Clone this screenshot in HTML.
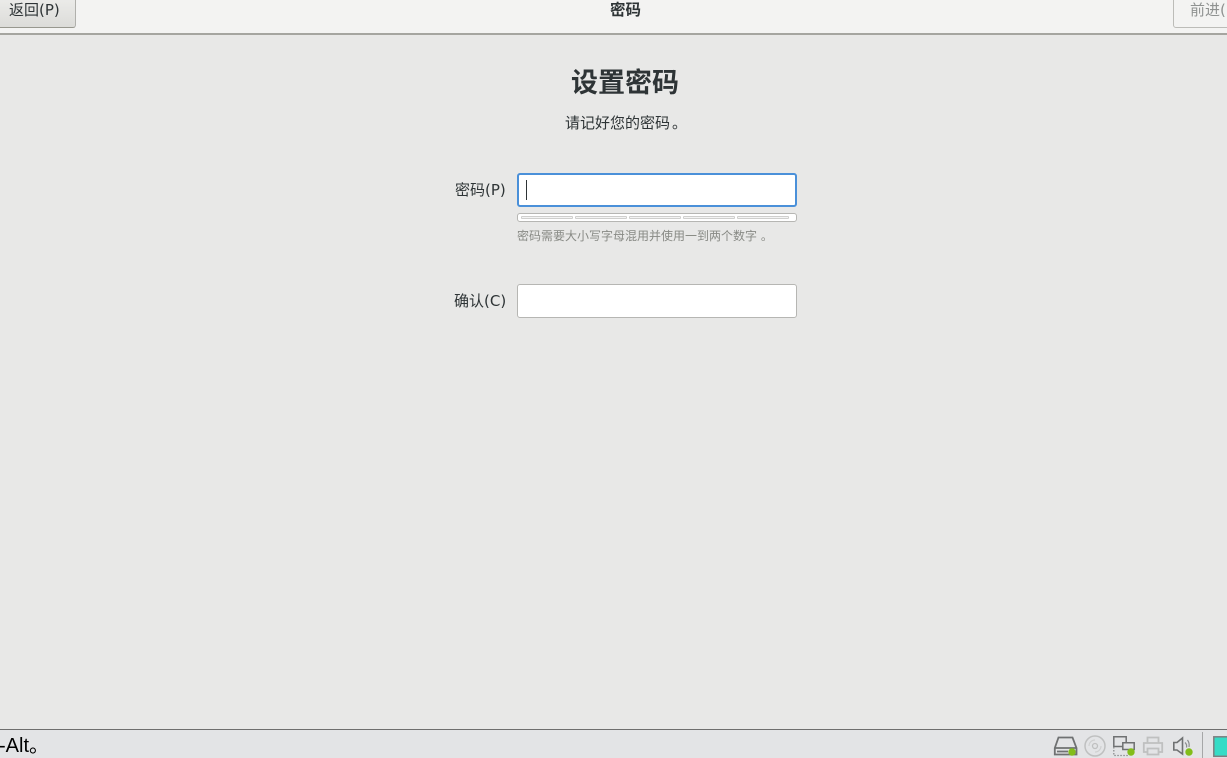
<!DOCTYPE html>
<html lang="zh"><head><meta charset="utf-8"><title>密码</title>
<style>
html,body{margin:0;padding:0;width:1227px;height:758px;overflow:hidden;background:#e8e8e7;font-family:"DejaVu Sans","WenQuanYi Zen Hei","Noto Sans CJK SC",sans-serif;color:#2e3436}
div,svg{position:absolute;box-sizing:border-box}
.t{white-space:nowrap;line-height:20px}
.seg{top:216px;width:52px;height:3px;background:#f4f4f4;border:1px solid #cfcfcd;border-radius:1px}
</style></head><body>
<div style="left:0;top:0;width:1227px;height:34px;background:#f3f3f2"></div>
<div style="left:0;top:33px;width:1227px;height:2px;background:#a5a5a0"></div>
<div style="left:-5px;top:-5px;width:81px;height:33px;background:linear-gradient(#ededeb,#dcdcd9);border:1px solid #b0b0ac;border-bottom-color:#98988f;border-radius:3px"></div>
<div class="t" style="left:9px;top:0;font-size:15px;color:#2e3436">返回(P)</div>
<div class="t" style="left:610px;top:0;font-size:15.5px;font-weight:bold;color:#2e3436">密码</div>
<div style="left:1173px;top:-5px;width:70px;height:33px;background:#f3f3f2;border:1px solid #bcbcb8;border-radius:3px"></div>
<div style="left:1174px;top:0;width:53px;height:27px;overflow:hidden"><div class="t" style="left:16px;top:0;font-size:15px;color:#8f9291">前进(N)</div></div>

<div class="t" style="left:571px;top:70px;font-size:27px;line-height:28px;font-weight:bold;color:#2e3436">设置密码</div>
<div class="t" style="left:565px;top:113px;font-size:15px;color:#2e3436">请记好您的密码<span style="margin-left:2px">。</span></div>

<div class="t" style="left:455px;top:180px;font-size:15px;color:#2e3436">密码(P)</div>
<div style="left:517px;top:173px;width:280px;height:34px;background:#fff;border:2px solid #4a90d9;border-radius:3px"></div>
<div style="left:526px;top:180px;width:1px;height:20px;background:#2e3436"></div>

<div style="left:517px;top:213px;width:280px;height:9px;background:#fff;border:1px solid #b6b6b3;border-radius:3px"></div>
<div class="seg" style="left:521px"></div>
<div class="seg" style="left:575px"></div>
<div class="seg" style="left:629px"></div>
<div class="seg" style="left:683px"></div>
<div class="seg" style="left:737px"></div>
<div class="t" style="left:517px;top:226px;font-size:12px;color:#888a85">密码需要大小写字母混用并使用一到两个数字 。</div>

<div class="t" style="left:454px;top:291px;font-size:15px;color:#2e3436">确认(C)</div>
<div style="left:517px;top:284px;width:280px;height:34px;background:#fff;border:1px solid #b6b6b3;border-radius:3px"></div>

<div style="left:0;top:729px;width:1227px;height:29px;background:#e3e4e6;border-top:1px solid #6e6e6e"></div>
<div class="t" style="left:-1px;top:735px;font-size:20px;line-height:22px;font-family:'Liberation Sans','WenQuanYi Zen Hei',sans-serif;color:#000">-Alt。</div>

<svg style="left:1050px;top:732px" width="177" height="26" viewBox="0 0 177 26" fill="none">
<!-- drive -->
<path d="M4.800 22.500V16L8.500 5.500H22.500L26.500 16V22.500Z M4.800 16H26.500 M7 19.500H18" stroke="#6f7172" stroke-width="1.800"/>
<circle cx="22" cy="20" r="3.700" fill="#82bd1a"/>
<!-- disc -->
<circle cx="45" cy="14" r="10" stroke="#bfc0c0" stroke-width="1.500"/>
<circle cx="45" cy="14" r="2.500" stroke="#bfc0c0" stroke-width="1.300"/>
<path d="M39 14a6 6 0 0 1 6-6M51 14a6 6 0 0 1-6 6" stroke="#cfd0d0" stroke-width="1.200"/>
<!-- network -->
<path d="M63.800 4.800H76.200V14.500H63.800Z" stroke="#6f7172" stroke-width="1.500"/>
<path d="M72.800 10.800H84.200V17.500H72.800Z" fill="#e3e4e6" stroke="#6f7172" stroke-width="1.500"/>
<path d="M63.800 15V23.500H78" stroke="#8b8d8e" stroke-width="1.300" stroke-dasharray="1.500 1.500"/>
<circle cx="81" cy="20" r="3.700" fill="#82bd1a"/>
<!-- printer -->
<path d="M97.500 10.500V5.500H108.500V10.500M97.500 20H93.800V11H112.200V20H108.500M97.500 16.500H108.500V22.500H97.500Z" stroke="#bfc0c0" stroke-width="1.800"/>
<!-- sound -->
<path d="M123.800 10.500H127L132.500 6V22L127 18H123.800Z" stroke="#6f7172" stroke-width="1.600"/>
<path d="M135 10.500a5 5 0 0 1 1.500 5M137.500 8a9 9 0 0 1 1.500 7" stroke="#8b8d8e" stroke-width="1.200"/>
<circle cx="139" cy="20" r="3.700" fill="#82bd1a"/>
<!-- separator and color swatch -->
<path d="M152.500 0V26" stroke="#a6a7a8" stroke-width="1"/>
<rect x="163.800" y="4.800" width="15" height="19.500" fill="#36dcc6" stroke="#7d7f80" stroke-width="1.500"/>
</svg>
</body></html>
